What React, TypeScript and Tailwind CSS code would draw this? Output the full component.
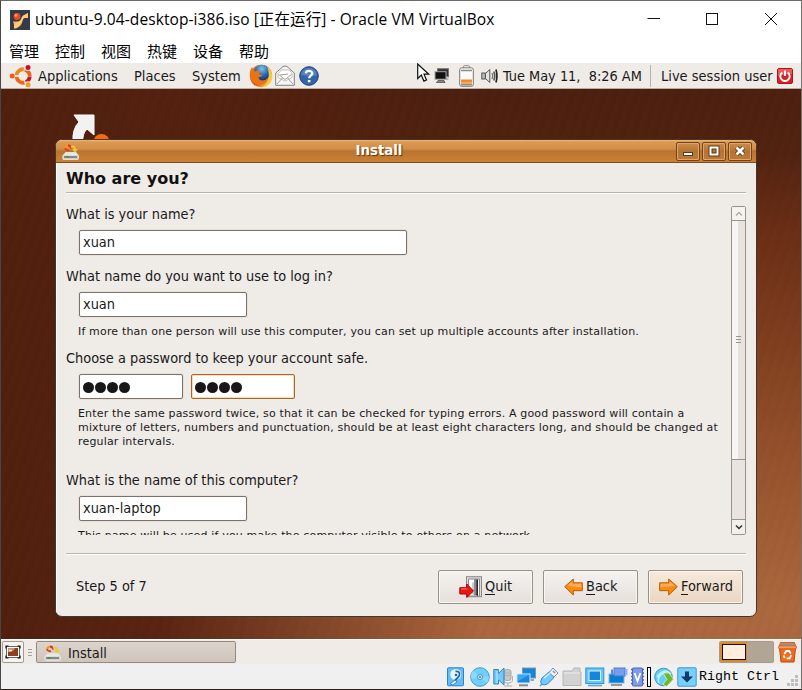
import React from "react";

const gnome = "font-['DejaVu_Sans_Condensed','DejaVu_Sans',sans-serif] text-[14.4px] leading-5 whitespace-nowrap text-[#1a1a1a]";
const hint = "font-['DejaVu_Sans',sans-serif] text-[11px] tracking-[0.165px] leading-[14px] whitespace-nowrap text-[#1a1a1a] pl-3";

function VBoxLogo() {
  return (
    <svg width="20" height="20" viewBox="0 0 20 20" className="shrink-0">
      <defs>
        <linearGradient id="vb" x1="0" y1="0" x2="1" y2="1">
          <stop offset="0" stopColor="#f07020" />
          <stop offset="0.5" stopColor="#ffd078" />
          <stop offset="1" stopColor="#f0a030" />
        </linearGradient>
      </defs>
      <rect width="20" height="20" fill="#343a46" />
      <path d="M3 11.500h5c3 0 3-4 5-6l5-2.500v5h-3c-3 0-2 5-5 8-3 2.500-5 2.500-6 2.500v-3.500c0-2-1-2.500-1-3.500z" fill="url(#vb)" />
      <circle cx="7" cy="6.5" r="3.400" fill="#e84a22" />
      <circle cx="6" cy="5.300" r="1.500" fill="#ff9270" />
    </svg>
  );
}

function UbuntuLogo() {
  return (
    <svg width="24" height="24" viewBox="0 0 24 24" className="shrink-0">
      <g fill="none" strokeWidth="3.800">
        <path d="M7.500 11A6.700 6.700 0 0 1 14.800 5.300" stroke="#ee8a1c" />
        <path d="M15.800 5.600A6.700 6.700 0 0 1 20.700 12" stroke="#e8641c" />
        <path d="M20.700 12.500A6.700 6.700 0 0 1 16.800 18.200" stroke="#c8161c" />
        <path d="M7.500 13A6.700 6.700 0 0 0 15.500 18.600" stroke="#f0641c" />
      </g>
      <circle cx="19" cy="3.800" r="3.200" fill="#efebe7" />
      <circle cx="19" cy="20.400" r="3.200" fill="#efebe7" />
      <circle cx="19" cy="3.600" r="2.500" fill="#c8102e" />
      <circle cx="3.200" cy="12" r="2.500" fill="#ee5a22" />
      <circle cx="19" cy="20.800" r="2.500" fill="#f39a1e" />
    </svg>
  );
}

function Firefox() {
  return (
    <svg width="24" height="24" viewBox="0 0 24 24" className="shrink-0">
      <defs>
        <radialGradient id="gl" cx="0.5" cy="0.25" r="0.7">
          <stop offset="0" stopColor="#7cc4ee" />
          <stop offset="0.6" stopColor="#2868b0" />
          <stop offset="1" stopColor="#173878" />
        </radialGradient>
        <linearGradient id="fx" x1="0" y1="0" x2="1" y2="0.8">
          <stop offset="0" stopColor="#ee8a1c" />
          <stop offset="0.55" stopColor="#dc480c" />
          <stop offset="1" stopColor="#fadc50" />
        </linearGradient>
      </defs>
      <circle cx="12" cy="12" r="11.200" fill="url(#fx)" />
      <circle cx="12.800" cy="8.800" r="8" fill="url(#gl)" />
      <path d="M3 3C1 6 .5 9 1 13c1 5 5 8 9 8 5 0 9-3 9.500-8-1.500 3-4 4.500-7 3.500-2-.5-3-2-3-3.500 1 0 3 0 4-1.500L10 10c0-1.500 1-2.500 2-2.500-2-1.500-4-1-5.500 0C5 6.500 3.500 5 3 3z" fill="#ea7414" />
      <path d="M18 2.500c5 4 7 11 3 16.500-2 2.500-5 4-8 4 6-3 9-11 5-20.500z" fill="#fac840" />
    </svg>
  );
}

function Mail() {
  return (
    <svg width="20" height="22" viewBox="0 0 20 22" className="shrink-0">
      <path d="M.7 8L8 1.500q2-1 4 0L19.300 8v12.300H.7z" fill="#f6f6f3" stroke="#83837f" />
      <path d="M3 8.500L6.500 5h8L17 8.500v4L10 16l-7-3.500z" fill="#fff" stroke="#c1c1bd" />
      <path d="M3.500 9.500l6.500 5 6.500-5M2 19l5.500-6.200M18 19l-5.500-6.200M5 10l8-1" fill="none" stroke="#a0a09b" />
    </svg>
  );
}

function Help() {
  return (
    <svg width="20" height="20" viewBox="0 0 20 20" className="shrink-0">
      <circle cx="10" cy="10" r="9.300" fill="#3464a8" stroke="#1f427c" />
      <path d="M2 9a8 7 0 0 1 16 0c-5 3-11 0-16 0z" fill="#5482bf" />
      <path d="M6.800 7.300c.3-3.300 6.600-3.200 6.500.2 0 2.200-3.200 2.200-3.200 4.800" fill="none" stroke="#fff" strokeWidth="2.300" />
      <rect x="8.800" y="14" width="2.600" height="2.300" fill="#fff" />
    </svg>
  );
}

function Pointer() {
  return (
    <svg width="13" height="20" viewBox="0 0 13 20" className="shrink-0">
      <path d="M.7 1v14.500l3.600-3.400 2.600 6 2.600-1.200-2.500-5.700h4.800z" fill="#fff" stroke="#111" strokeWidth="1.200" />
    </svg>
  );
}

function NetIcon() {
  return (
    <svg width="16" height="16" viewBox="0 0 16 16" className="shrink-0">
      <rect x="3.500" y=".7" width="11" height="8" fill="#333" stroke="#777" />
      <rect x="1" y="3.700" width="11" height="7.500" fill="#111" stroke="#a5a5a5" />
      <path d="M12 11h2.500" stroke="#888" />
      <path d="M4 12.500h6l1 2H2.500z" fill="#888" stroke="#444" strokeWidth=".7" />
    </svg>
  );
}

function Battery() {
  return (
    <svg width="15" height="22" viewBox="0 0 15 22" className="shrink-0">
      <rect x="4.500" y=".7" width="6" height="3.500" rx="1" fill="#f6f6f4" stroke="#8c8c88" />
      <rect x=".7" y="2.800" width="13.600" height="18.500" rx="2" fill="#fbfbfb" stroke="#777773" />
      <rect x="2" y="14.500" width="11" height="4.500" fill="#f08a2a" />
      <rect x="2" y="17" width="11" height="2" fill="#f8a95a" />
      <path d="M2 5.500h11M2 19.800h11" stroke="#8c8c88" strokeWidth="1.600" />
    </svg>
  );
}

function Volume() {
  return (
    <svg width="17" height="16" viewBox="0 0 17 16" className="shrink-0">
      <rect x=".8" y="5" width="3.500" height="6" fill="#bbb" stroke="#555" />
      <path d="M4.500 5.500L8.800 1.500v13L4.500 10.500z" fill="#e4e4e4" stroke="#555" />
      <path d="M11 5q1.500 3 0 6" fill="none" stroke="#777" strokeWidth="1.400" />
      <path d="M12.800 3.500q2 4.500 0 9" fill="none" stroke="#555" strokeWidth="1.500" />
      <path d="M15 1.500q1.800 6.500 0 13" fill="none" stroke="#222" strokeWidth="1.700" />
    </svg>
  );
}

function Power() {
  return (
    <svg width="16" height="16" viewBox="0 0 16 16" className="shrink-0">
      <rect x=".5" y=".5" width="15" height="15" rx="1.500" fill="#d92024" stroke="#b51116" />
      <path d="M1 8V1h14v5q-6 0-14 2z" fill="#e85a5c" />
      <path d="M5.200 4.500a4.700 4.700 0 1 0 5.600 0M8 2.500V8" fill="none" stroke="#fff" strokeWidth="1.900" />
    </svg>
  );
}

function Installer() {
  return (
    <svg width="17" height="16" viewBox="0 0 17 16" className="shrink-0">
      <path d="M3 4q1-3 4-2" fill="none" stroke="#f09a20" strokeWidth="2" />
      <path d="M3 4q1 3 4 2" fill="none" stroke="#e0401c" strokeWidth="2" />
      <path d="M6 1.500q3 0 3 3" fill="none" stroke="#dd3020" strokeWidth="1.800" />
      <path d="M9 3q4-2 4 3m-2-1l2 2.500 2-2.500" fill="none" stroke="#e8cc30" strokeWidth="1.700" />
      <path d="M3.500 8h10.500l2.300 3H1.200z" fill="#e4e4e4" />
      <rect x=".8" y="11" width="15.700" height="4.500" rx=".8" fill="#ccc" stroke="#f4f4f4" strokeWidth=".7" />
      <path d="M2 13h13" stroke="#444" />
      <path d="M4 13h3" stroke="#3c9020" />
    </svg>
  );
}

function QuitIcon() {
  return (
    <svg width="24" height="22" viewBox="0 0 24 22" className="shrink-0">
      <rect x="7.500" y=".7" width="15" height="20" fill="#ddd" stroke="#888" />
      <path d="M9.500 3h11v17h-11z" fill="#fff" stroke="#888" />
      <path d="M15 3.500h4V20l-4-2z" fill="#222" />
      <path d="M15 3h2.500v15L15 20z" fill="#8c8c8c" />
      <path d="M13 7l2-1v14l-2-2z" fill="#ccc" />
      <path d="M.8 11.700h7V8L14.500 15l-6.700 6.500V18h-7z" fill="#ea1515" stroke="#b80000" />
      <path d="M2 12.900h6.500" stroke="#ff7070" />
    </svg>
  );
}

function Arrow({ flip = false }: { flip?: boolean }) {
  return (
    <svg width="19" height="18" viewBox="0 0 19 18" className={flip ? "shrink-0 -scale-x-100" : "shrink-0"}>
      <path d="M.7 4.800h9V1l8.600 7.700L9.700 17v-4.300h-9z" fill="#f98c10" stroke="#b85b08" />
      <path d="M1.600 5.800h9V3.200l5 4.500L1.600 9.500z" fill="#fcac5e" />
    </svg>
  );
}

function DesktopIcon() {
  return (
    <svg width="16" height="14" viewBox="0 0 16 14">
      <rect x="1.500" y="1.500" width="13" height="11" fill="#fff" stroke="#666" />
      <rect x="3" y="3" width="10" height="8" fill="#8c3e22" />
      <path d="M3 3h7q-1 4-7 4z" fill="#d08c70" />
      <path d="M4 5.500h3" stroke="#fff" strokeWidth="1.500" />
      <path d="M1 3.500V1h2.500M12.500 1H15v2.500M15 10.500V13h-2.500M3.500 13H1v-2.500" fill="none" stroke="#111" strokeWidth="1.200" />
    </svg>
  );
}

function Trash() {
  return (
    <svg width="19" height="22" viewBox="0 0 19 22" className="shrink-0">
      <path d="M1.500 7h16l-1.500 14h-13z" fill="#ee6a20" stroke="#c04a08" />
      <path d="M2.500 1.500h14l1.500 4.500H1z" fill="#9d928a" stroke="#d86020" />
      <rect x=".5" y="4.800" width="18" height="3" rx="1" fill="#f59a60" stroke="#c85a18" strokeWidth=".7" />
      <path d="M6.300 13l2-3h2.800l1.600 2.500M13.200 14l-1.500 3.300h-3M6.800 17l-1.300-2.500" fill="none" stroke="#fff" strokeWidth="1.800" />
    </svg>
  );
}

function Cell({ children, w = 20 }: { children: React.ReactNode; w?: number }) {
  return (
    <svg width={w} height="20" viewBox={`0 0 ${w} 20`} className="shrink-0">
      {children}
    </svg>
  );
}

function StatusIcons() {
  return (
    <div className="flex items-center gap-[3px]">
      <Cell>
        <rect x=".5" y=".8" width="16" height="18" rx="1" fill="#62bdf7" stroke="#2d83cb" />
        <circle cx="8.700" cy="7.500" r="5.500" fill="#e6f6ff" />
        <path d="M8.500 4.500c5-1 5 4 2 6.500l-3 3" fill="none" stroke="#2565a5" strokeWidth="1.800" />
        <path d="M3 17l5-4 2 2-4 3z" fill="#d9efff" stroke="#2a78bd" strokeWidth=".8" />
        <circle cx="9" cy="8" r="1.300" fill="#2468aa" />
      </Cell>
      <Cell>
        <circle cx="10" cy="10" r="9.300" fill="#70cffa" stroke="#4198d0" />
        <path d="M10 10L3 3.500A9 9 0 0 0 1.500 12zM10 10l7 6a9 9 0 0 0 1.500-7z" fill="#8ad8ff" />
        <circle cx="10" cy="10" r="2.500" fill="#d4f2ff" stroke="#3f97cc" />
        <circle cx="10" cy="10" r="1" fill="#2d79a8" />
      </Cell>
      <Cell>
        <rect x="11" y="2.500" width="7" height="11" rx="2.500" fill="#c7c7c7" stroke="#aaa" />
        <path d="M10.500 9v4q0 3 4.500 3t4.500-3V9M15 16v3M11 19h8M12 6h6M12 8.500h6" fill="none" stroke="#b0b0b0" />
        <path d="M.8 2.500h4.500v4L11 1v17l-5.500-5v4H.8z" fill="#75caf5" stroke="#3183bd" />
        <path d="M4 4v12" stroke="#b9e8ff" />
      </Cell>
      <Cell>
        <rect x="6.500" y="1" width="13" height="10" fill="#1285dc" stroke="#8197a5" />
        <path d="M14 13h4" stroke="#888" strokeWidth="1.500" />
        <rect x="1" y="7" width="13" height="9" fill="#1688df" stroke="#d3edff" />
        <path d="M2 8h11L2 14z" fill="#40a8f2" />
        <path d="M3 18.300h9" stroke="#858b91" strokeWidth="2" />
      </Cell>
      <Cell>
        <path d="M3 11l7-6q3-1 4.500 1.500t0 4.500l-6 6q-4 2-6 0t.5-6z" fill="#74caff" stroke="#348acc" />
        <path d="M10 5.500l4-4.500 5 5-4 4z" fill="#eaeef1" stroke="#879099" />
        <path d="M5 11l6-5" stroke="#d0efff" strokeWidth="1.500" />
        <path d="M3 17l-2 2M14 4l2 2" stroke="#58a4d9" strokeWidth="1.500" />
      </Cell>
      <Cell>
        <path d="M1 4h9l2-3h6v4h1v13.500H1z" fill="#d2d2d2" stroke="#b6b6b6" />
        <path d="M2 6h16" stroke="#e5e5e5" strokeWidth="1.500" />
      </Cell>
      <Cell>
        <rect x=".8" y="1" width="18" height="15.500" fill="#65c7fb" stroke="#3b91c9" />
        <rect x="4" y="4" width="11.500" height="9.500" fill="#1487dd" stroke="#ddf4ff" />
        <path d="M3 18.500h14" stroke="#5caad8" strokeWidth="1.700" />
      </Cell>
      <Cell>
        <rect x="1" y="7" width="15" height="9" fill="#087ed5" stroke="#80b9e0" />
        <path d="M3 18h11" stroke="#999" strokeWidth="2" />
        <rect x="6" y="1" width="11" height="8" fill="#769eee" stroke="#5177c0" />
        <path d="M17 3l2.500-1.500v7L17 7z" fill="#8cb2fc" />
        <path d="M4 2.500v5" stroke="#5d89d4" strokeWidth="2" />
      </Cell>
      <Cell w={13}>
        <path d="M0 2.500h13M0 6h13M0 9.500h13M0 13h13M0 16.500h13" stroke="#4968b7" strokeWidth="1.500" />
        <rect x="1.500" y="1" width="10" height="18" rx="1" fill="#8099e8" stroke="#4968b7" />
        <path d="M3.500 6l3 8 3-8" fill="none" stroke="#fff" strokeWidth="1.800" />
      </Cell>
      <div className="h-5 w-1 border border-black bg-white" />
      <Cell>
        <circle cx="9.500" cy="10" r="8.800" fill="#62cdf7" stroke="#4198c3" />
        <path d="M3 10q7-10 14-3M5 16Q2 9 12 5" fill="none" stroke="#bff0ff" strokeWidth="1.500" />
        <path d="M9 6h6l4.500 6-7 7.500-3.500-2.500 4-4.500z" fill="#6eb72d" stroke="#dff5bc" strokeWidth=".8" />
      </Cell>
      <Cell>
        <rect x=".8" y=".8" width="18.400" height="18.400" rx="1" fill="#78d0ff" stroke="#3b98d4" />
        <path d="M8 4.500h4v5h4l-6 6-6-6h4z" fill="#103c66" />
      </Cell>
    </div>
  );
}

function Field({ value, w, focus = false }: { value: string; w: string; focus?: boolean }) {
  const dots = value === "••••";
  return (
    <div className={`${w} flex h-[25px] items-center rounded-[2px] border bg-white pl-[3px] ${focus ? "border-[#a9662b] shadow-[inset_0_0_0_1px_#f6dcb8]" : "border-[#7e7268] shadow-[0_0_0_1px_#e6e1da]"} ${gnome}`}>
      {dots ? (
        <div className="flex gap-px pt-0.5">
          {[0, 1, 2, 3].map((i) => (
            <i key={i} className="size-[11px] rounded-full bg-[#171717]" />
          ))}
        </div>
      ) : (
        <span className="pb-px">{value}</span>
      )}
    </div>
  );
}

function WinButton({ children }: { children: React.ReactNode }) {
  return (
    <div className="flex h-[19px] w-6 items-center justify-center rounded-[2px] border border-[#70431d] bg-linear-to-b from-[#cf8c48] via-[#b27435] to-[#bd7b38] shadow-[inset_0_0_0_1px_#e0a568]">
      <svg width="12" height="12" viewBox="0 0 12 12">{children}</svg>
    </div>
  );
}

function Button({ children, icon, k, primary = false, pad }: { children: string; icon: React.ReactNode; k: string; primary?: boolean; pad: string }) {
  return (
    <div className={`flex h-[34px] w-[95px] items-center rounded-[2px] border border-[#9b9084] shadow-[inset_0_0_0_1px_#faf7f3] bg-linear-to-b ${pad} ${primary ? "from-[#f6eadc] to-[#ead7c3]" : "from-[#f4f2ef] to-[#e6e0dc]"} ${gnome}`}>
      {icon}
      <span className="pb-0.5"><span className="border-b border-[#1a1a1a]">{k}</span>{children}</span>
    </div>
  );
}

function Rule() {
  return <div className="h-0.5 shrink-0 border-t border-[#bfb4a5] bg-white" />;
}

function InstallWindow() {
  return (
    <div className="absolute left-[54px] top-[50px] flex h-[478px] w-[702px] flex-col overflow-hidden rounded-[7px] border border-[#40372f] bg-[#efebe7]">
      <div className="flex h-[23px] shrink-0 items-center border-b border-[#7d4b20] bg-[linear-gradient(#eab780_0,#dc9950_2px,#d38d48_9px,#b9742f_11px,#cb8135_22px)] pl-1.5 pr-1">
        <div className="w-5 pt-0.5"><Installer /></div>
        <div className="flex-1 pb-0.5 text-center font-['DejaVu_Sans_Condensed',sans-serif] text-[14.8px] font-bold leading-5 text-white [text-shadow:1px_1px_1px_#60370f]">Install</div>
        <div className="flex gap-0.5">
          <WinButton><rect x="1.500" y="7.500" width="9" height="3" fill="#fff" stroke="#60370f" /></WinButton>
          <WinButton><rect x="2.500" y="2.500" width="7" height="7" fill="none" stroke="#60370f" strokeWidth="4" /><rect x="2.500" y="2.500" width="7" height="7" fill="none" stroke="#fff" strokeWidth="2" /></WinButton>
          <WinButton><path d="M2.500 2.500l7 7m0-7l-7 7" stroke="#60370f" strokeWidth="4.500" /><path d="M2.500 2.500l7 7m0-7l-7 7" stroke="#fff" strokeWidth="2.600" /></WinButton>
        </div>
      </div>
      <div className="flex min-h-0 flex-1 flex-col border-l border-white pl-[9px] pr-2.5">
        <div className="h-[29px] shrink-0 pt-1.5 font-['DejaVu_Sans',sans-serif] text-[16px] font-bold leading-5 text-[#111]">Who are you?</div>
        <Rule />
        <div className="flex h-[341px] shrink-0">
          <div className="flex w-[665px] shrink-0 flex-col overflow-hidden pt-2.5">
            <div className={gnome}>What is your name?</div>
            <div className="mb-[11px] ml-[13px] mt-1.5"><Field value="xuan" w="w-[328px]" /></div>
            <div className={gnome}>What name do you want to use to log in?</div>
            <div className="mb-2 ml-[13px] mt-1.5"><Field value="xuan" w="w-[168px]" /></div>
            <div className={hint}>If more than one person will use this computer, you can set up multiple accounts after installation.</div>
            <div className={`${gnome} mt-[9px]`}>Choose a password to keep your account safe.</div>
            <div className="mb-2 ml-[13px] mt-1.5 flex gap-2">
              <Field value="••••" w="w-[104px]" />
              <Field value="••••" w="w-[104px]" focus />
            </div>
            <div className={hint}>
              Enter the same password twice, so that it can be checked for typing errors. A good password will contain a<br />
              mixture of letters, numbers and punctuation, should be at least eight characters long, and should be changed at<br />
              regular intervals.
            </div>
            <div className={`${gnome} mt-[21px]`}>What is the name of this computer?</div>
            <div className="mb-2 ml-[13px] mt-1.5"><Field value="xuan-laptop" w="w-[168px]" /></div>
            <div className={hint}>This name will be used if you make the computer visible to others on a network.</div>
          </div>
          <div className="mt-3 flex h-[329px] w-[15px] shrink-0 flex-col rounded-[2px] border border-[#9a9187] bg-[#e9e4e0]">
            <div className="flex h-[13px] items-center justify-center bg-[#f5f3f1]">
              <svg width="8" height="6" viewBox="0 0 8 6"><path d="M1 4.500l3-3 3 3" fill="none" stroke="#b5aba2" strokeWidth="1.500" /></svg>
            </div>
            <div className="flex h-[240px] flex-col items-center justify-center gap-0.5 border-y border-[#9a9187] bg-[linear-gradient(90deg,#f7f5f3_0_45%,#e9e3e0_50%_100%)] pb-0.5">
              <i className="h-px w-[5px] bg-[#99938d]" /><i className="h-px w-[5px] bg-[#99938d]" /><i className="h-px w-[5px] bg-[#99938d]" />
            </div>
            <div className="flex-1" />
            <div className="flex h-[15px] items-center justify-center border-t border-[#9a9187] bg-[#f2efed]">
              <svg width="8" height="6" viewBox="0 0 8 6"><path d="M1 1.500l3 3 3-3" fill="none" stroke="#333" strokeWidth="1.500" /></svg>
            </div>
          </div>
        </div>
        <div className="mt-[18px]"><Rule /></div>
        <div className="flex items-center pl-2.5 pr-[3px] pt-[15px]">
          <div className={`${gnome} flex-1 pb-0.5`}>Step 5 of 7</div>
          <div className="flex gap-2.5">
            <Button k="Q" pad="pl-5 gap-0.5" icon={<QuitIcon />}>uit</Button>
            <Button k="B" pad="pl-5 gap-[3px]" icon={<Arrow flip />}>ack</Button>
            <Button k="F" pad="pl-2.5 gap-[3px]" primary icon={<Arrow />}>orward</Button>
          </div>
        </div>
      </div>
    </div>
  );
}

export default function App() {
  return (
    <div className="flex h-[690px] w-[802px] flex-col overflow-hidden border border-b-[#2b1a16] border-l-[#4a4646] border-r-[#77706c] border-t-[#6b6969] bg-white">
      <header className="flex h-[37px] shrink-0 items-center pl-[9px]">
        <VBoxLogo />
        <div className="ml-[5px] flex-1 whitespace-nowrap pb-px font-['Open_Sans','Noto_Sans_CJK_SC',sans-serif] text-[15.5px] leading-6 tracking-[0.095px] text-black">
          ubuntu-9.04-desktop-i386.iso [正在运行] - Oracle VM VirtualBox
        </div>
        <svg width="154" height="16" viewBox="0 0 154 16" fill="none" stroke="#111" className="mb-[3px] shrink-0">
          <path d="M.5 8.500H13M118 3l12 12m0-12l-12 12" />
          <rect x="59.500" y="3.500" width="11" height="11" />
        </svg>
      </header>
      <nav className="flex h-[25px] shrink-0 items-center gap-4 pl-2 font-['Noto_Sans_CJK_SC',sans-serif] text-[15px] leading-5 text-black">
        <span>管理</span><span>控制</span><span>视图</span><span>热键</span><span>设备</span><span>帮助</span>
      </nav>
      <div className={`${gnome} flex h-[26px] shrink-0 items-center border-b border-[#b9ada0] bg-[#efebe7] pl-2`}>
        <UbuntuLogo />
        <span className="ml-[5px] w-24 text-[14.5px]">Applications</span>
        <span className="w-[58px] text-[14.5px]">Places</span>
        <span className="w-[57px] text-[14.5px]">System</span>
        <Firefox />
        <div className="ml-0.5"><Mail /></div>
        <div className="ml-1"><Help /></div>
        <div className="ml-[98px] -mt-1.5"><Pointer /></div>
        <div className="ml-1"><NetIcon /></div>
        <div className="ml-[9px]"><Battery /></div>
        <div className="ml-[7px]"><Volume /></div>
        <span className="ml-[5px] w-[147px] whitespace-pre">Tue May 11,  8:26 AM</span>
        <i className="h-[22px] w-px bg-[#bdb1a5]" />
        <span className="ml-2.5 w-[116px] text-[14.5px]">Live session user</span>
        <Power />
      </div>
      <main className="relative h-[550px] shrink-0 overflow-hidden bg-[repeating-linear-gradient(108deg,#ffffff02_0,#ffffff00_4px,#00000004_7px,#ffffff02_10px),linear-gradient(90deg,#501f0e_0%,#54200ff0_20%,#501f0e00_60%),linear-gradient(178deg,#4b1e0e_0%,#50220f_15%,#6a2d15_29%,#7b3b1c_45%,#96522c_70%,#ab673d_94%)]">
        <svg width="42" height="28" viewBox="0 0 42 28" className="absolute left-[70px] top-[25px]">
          <circle cx="30.500" cy="28" r="8" fill="#f66a08" />
          <path d="M3 1h20v20l-7-6q-5 5-4 13H2Q1 15 8 8z" fill="#f2f2f0" stroke="#fff" />
        </svg>
        <InstallWindow />
      </main>
      <div className={`${gnome} flex h-[25px] shrink-0 items-center border-t border-white bg-[#efebe7] pl-px`}>
        <div className="flex h-[22px] w-[22px] items-center justify-center rounded-[2px] border border-[#a39a8f] bg-[#f5f3f0]"><DesktopIcon /></div>
        <div className="ml-[4px] flex w-1 flex-col gap-0.5"><i className="h-px bg-[#aaa198]" /><i className="h-px bg-[#aaa198]" /><i className="h-px bg-[#aaa198]" /></div>
        <div className="ml-1 flex h-[22px] w-[200px] items-center gap-[7px] rounded-[2px] border border-[#93897d] bg-linear-to-b from-[#dcd5cd] to-[#cec4bb] pl-[7px] pt-px"><Installer />Install</div>
        <div className="ml-auto flex h-[22px] w-[55px] overflow-hidden rounded-[2px] border border-[#a79b8f] bg-[#b1a596]">
          <div className="w-[27px] border-2 border-r-1 border-[#d98c2a] bg-[#ffeedd] shadow-[inset_0_0_0_1px_#111]" />
        </div>
        <div className="ml-1 mr-1"><Trash /></div>
      </div>
      <footer className="flex flex-1 items-center bg-[#f0f0f0] pl-[446px]">
        <StatusIcons />
        <span className="ml-0.5 w-[88px] shrink-0 whitespace-nowrap font-['Liberation_Mono',monospace] text-[13.330px] leading-5 text-black">Right Ctrl</span>
        <svg width="12" height="12" viewBox="0 0 12 12" className="mt-2 shrink-0" fill="#bdbdbd">
          <path d="M8 0h3v3H8zM4 4h3v3H4zM8 4h3v3H8zM0 8h3v3H0zM4 8h3v3H4zM8 8h3v3H8z" />
        </svg>
      </footer>
    </div>
  );
}
